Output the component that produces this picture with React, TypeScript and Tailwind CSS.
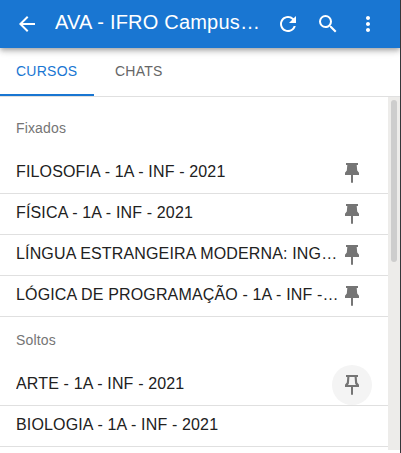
import React from "react";
import { MdArrowBack, MdMoreVert, MdRefresh, MdSearch } from "react-icons/md";

const pinned = [
  "FILOSOFIA - 1A - INF - 2021",
  "FÍSICA - 1A - INF - 2021",
  "LÍNGUA ESTRANGEIRA MODERNA: INGLÊS - 1A - INF - 2021",
  "LÓGICA DE PROGRAMAÇÃO - 1A - INF - 2021",
];

function PinFilled() {
  return (
    <svg viewBox="0 0 24 24" className="size-6 fill-[#757575]">
      <path d="M6 2h12v2h-1.3l.5 5.6L19 11.8V14h-6v7.7h-2V14H5v-2.2l1.8-2.2L7.3 4H6z" />
    </svg>
  );
}

function PinOutline() {
  return (
    <svg viewBox="0 0 24 24" className="size-6 fill-[#757575]">
      <path fillRule="evenodd" d="M6 2h12v2h-1.3l.5 5.6L19 11.8V14h-6v7.7h-2V14H5v-2.2l1.8-2.2L7.3 4H6zM9.4 4l-.5 6.4L8 12h8l-.9-1.6-.5-6.4z" />
    </svg>
  );
}

function Subheader({ children }: { children: React.ReactNode }) {
  return <h2 className="h-12 px-4 text-sm leading-[46px] tracking-[0.01071em] text-[#757575]">{children}</h2>;
}

function Course({ name, action }: { name: string; action?: React.ReactNode }) {
  return (
    <li className="flex h-[41px] items-center border-b border-[#e0e0e0] px-4">
      <span className="min-w-0 flex-1 truncate pb-0.5 text-base leading-6 tracking-[0.00938em] text-[#212121]">{name}</span>
      {action && <button className="ml-[-10px] flex size-10 shrink-0 items-center justify-center rounded-full">{action}</button>}
    </li>
  );
}

export default function App() {
  return (
    <div className="flex h-[453px] w-[401px] flex-col overflow-hidden border-r border-[#35363a] bg-white font-['Liberation_Sans',Arial,sans-serif]">
      <header className="z-10 flex h-12 shrink-0 items-center bg-[#1976d2] pl-[15px] pr-5 text-white shadow-[0_2px_4px_-1px_rgba(0,0,0,0.2),0_4px_5px_0_rgba(0,0,0,0.14),0_1px_10px_0_rgba(0,0,0,0.12)]">
        <MdArrowBack className="size-6 shrink-0" />
        <h1 className="ml-4 w-[207px] truncate pb-1 text-xl leading-8 tracking-[0.01em]">AVA - IFRO Campus Ji-Paraná</h1>
        <div className="ml-auto flex gap-4">
          <MdRefresh className="size-6" />
          <MdSearch className="size-6" />
          <MdMoreVert className="size-6" />
        </div>
      </header>
      <nav className="flex h-[49px] shrink-0 border-b border-[#e0e0e0] text-sm leading-[46px] tracking-[0.018em]">
        <span className="w-[94px] border-b-2 border-[#1976d2] pl-4 text-[#1976d2]">CURSOS</span>
        <span className="pl-[21px] text-[#666]">CHATS</span>
      </nav>
      <main className="flex min-h-0 flex-1">
        <div className="min-w-0 flex-1 overflow-hidden pt-2">
          <Subheader>Fixados</Subheader>
          <ul>
            {pinned.map((name) => (
              <Course key={name} name={name} action={<PinFilled />} />
            ))}
          </ul>
          <Subheader>Soltos</Subheader>
          <ul>
            <Course
              name="ARTE - 1A - INF - 2021"
              action={
                <span className="flex size-10 items-center justify-center rounded-full bg-[#f4f4f4]">
                  <PinOutline />
                </span>
              }
            />
            <Course name="BIOLOGIA - 1A - INF - 2021" />
          </ul>
        </div>
        <div className="h-[353px] w-3 bg-[#edecea] px-[3px] pt-[3px]">
          <div className="h-[162px] rounded-full bg-[#cdcdcd]" />
        </div>
      </main>
    </div>
  );
}
